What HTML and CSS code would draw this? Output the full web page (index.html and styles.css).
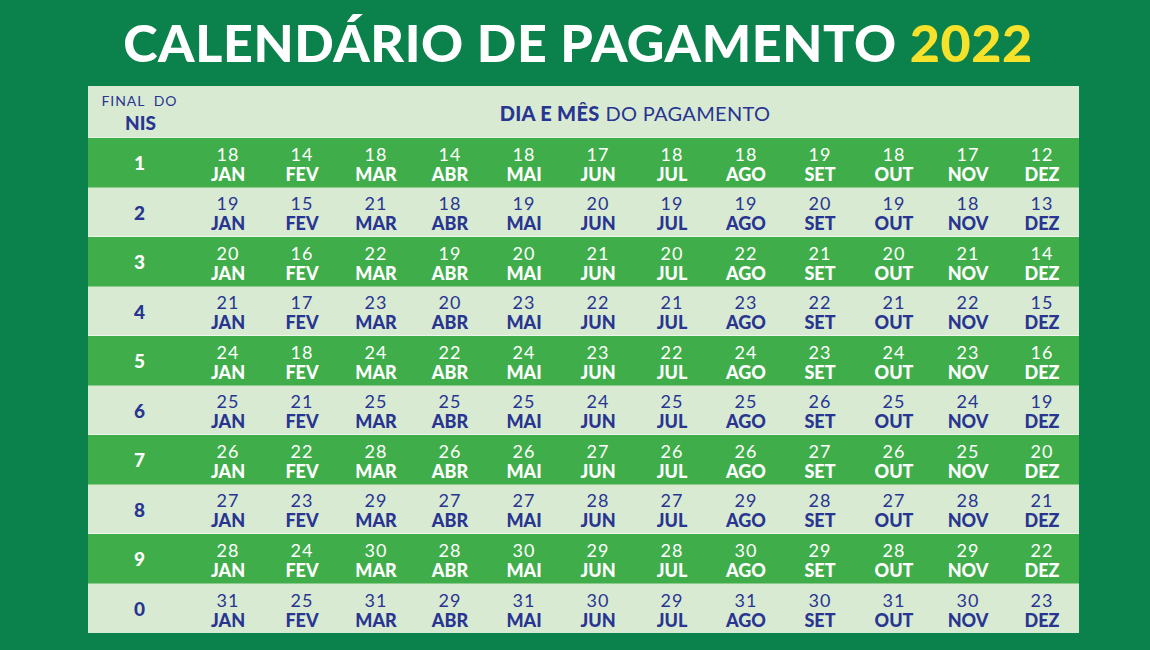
FILE: index.html
```html
<!DOCTYPE html>
<html lang="pt-BR">
<head>
<meta charset="utf-8">
<title>Calendário de Pagamento 2022</title>
<link rel="stylesheet" href="styles.css">
</head>
<body>
<div class="page">
  <h1 class="title">CALENDÁRIO DE PAGAMENTO <span class="year">2022</span></h1>
  <div class="table" id="table">
    <div class="head">
      <div class="nis-head"><span class="final">FINAL&nbsp; DO</span><span class="nis">NIS</span></div>
      <div class="dia-head"><b>DIA E MÊS</b> DO PAGAMENTO</div>
    </div>
  </div>
</div>
<script src="script.js"></script>
</body>
</html>
```
FILE: styles.css
```css
* { box-sizing: border-box; margin: 0; padding: 0; }
html, body { width: 1150px; height: 650px; overflow: hidden; }
body { background: #0b814b; font-family: "Lato", "Open Sans", sans-serif; }
.page { display: flex; flex-direction: column; align-items: flex-start; }
.title {
  width: 100%;
  height: 86px;
  display: flex;
  align-items: center;
  justify-content: center;
  padding-left: 6px;
  padding-bottom: 2px;
  color: #ffffff;
  font-family: "Lato", sans-serif;
  font-weight: 900;
  font-size: 52px;
  letter-spacing: 0.6px;
  white-space: pre;
}
.year { color: #f6e22b; }
.table { margin-left: 88px; width: 991px; display: flex; flex-direction: column; }
.head {
  height: 52px;
  background: #d9ead3;
  display: grid;
  grid-template-columns: 103px 1fr;
  color: #283591;
  border-bottom: 1px solid #e7f1e2;
}
.nis-head { display: flex; flex-direction: column; align-items: center; padding-top: 6px; }
.final { font-size: 14px; letter-spacing: 0.9px; line-height: 17px; font-weight: 400; }
.nis { font-weight: 900; font-size: 19px; line-height: 24px; padding-left: 2px; padding-top: 2px; }
.dia-head { display: flex; align-items: center; justify-content: center; font-size: 20px; padding-top: 2px; letter-spacing: 0.3px; }
.dia-head b { font-weight: 900; margin-right: 6px; }
.row {
  height: 49.5px;
  display: grid;
  grid-template-columns: 103px repeat(12, 74px);
  align-items: center;
  color: #283591;
  background: #d9ead3;
  border-bottom: 1px solid #eef5ea;
}
.row.dark { background: #3fae4a; color: #ffffff; border-bottom-color: #8ccb8c; }
.row:last-child { border-bottom: none; }
.rnum { text-align: center; font-weight: 900; font-size: 19px; padding-top: 1px; }
.cell { display: flex; flex-direction: column; align-items: center; line-height: 20px; padding-top: 3px; }
.day { font-size: 18px; font-weight: 400; letter-spacing: 1px; }
.mon { font-size: 18px; font-weight: 900; letter-spacing: 0; }
```
FILE: script.js
```js
const months = ["JAN","FEV","MAR","ABR","MAI","JUN","JUL","AGO","SET","OUT","NOV","DEZ"];
const data = [
  ["1",[18,14,18,14,18,17,18,18,19,18,17,12]],
  ["2",[19,15,21,18,19,20,19,19,20,19,18,13]],
  ["3",[20,16,22,19,20,21,20,22,21,20,21,14]],
  ["4",[21,17,23,20,23,22,21,23,22,21,22,15]],
  ["5",[24,18,24,22,24,23,22,24,23,24,23,16]],
  ["6",[25,21,25,25,25,24,25,25,26,25,24,19]],
  ["7",[26,22,28,26,26,27,26,26,27,26,25,20]],
  ["8",[27,23,29,27,27,28,27,29,28,27,28,21]],
  ["9",[28,24,30,28,30,29,28,30,29,28,29,22]],
  ["0",[31,25,31,29,31,30,29,31,30,31,30,23]]
];
const table = document.getElementById("table");
data.forEach((r, i) => {
  const row = document.createElement("div");
  row.className = "row" + (i % 2 === 0 ? " dark" : "");
  const n = document.createElement("div");
  n.className = "rnum";
  n.textContent = r[0];
  row.appendChild(n);
  r[1].forEach((d, j) => {
    const c = document.createElement("div");
    c.className = "cell";
    c.innerHTML = '<span class="day">' + d + '</span><span class="mon">' + months[j] + '</span>';
    row.appendChild(c);
  });
  table.appendChild(row);
});
```
